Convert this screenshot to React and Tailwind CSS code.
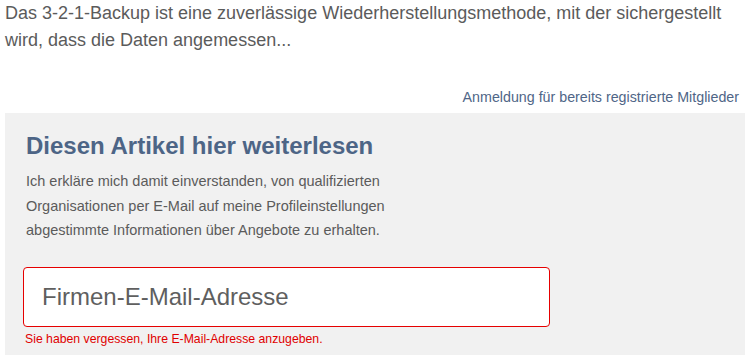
import React from "react";

export default function App() {
  return (
    <div className="w-[745px] h-[355px] overflow-hidden bg-white font-['Liberation_Sans',Arial,sans-serif]">
      <p className="px-[5px] text-[18px] leading-[27px] text-[#5b5b5b]">
        Das 3-2-1-Backup ist eine zuverlässige Wiederherstellungsmethode, mit der sichergestellt
        wird, dass die Daten angemessen...
      </p>

      <div className="mt-[33px] pr-[6px] text-right text-[14.25px] leading-[20px] text-[#4f6687]">
        <a href="#">Anmeldung für bereits registrierte Mitglieder</a>
      </div>

      <div className="ml-[5px] mt-[6px] bg-[#f1f1f1] pl-[18px] pt-[18px] pb-[20px]">
        <h2 className="pl-[3px] text-[24px] leading-[30px] font-bold text-[#4d6586]">
          Diesen Artikel hier weiterlesen
        </h2>
        <p className="mt-[8px] pl-[3px] w-[400px] text-[14.5px] leading-[24.5px] text-[#5b5b5b]">
          Ich erkläre mich damit einverstanden, von qualifizierten
          <br />
          Organisationen per E-Mail auf meine Profileinstellungen
          <br />
          abgestimmte Informationen über Angebote zu erhalten.
        </p>

        <form className="mt-[24px]">
          <input
            type="email"
            placeholder="Firmen-E-Mail-Adresse"
            className="block w-[527px] h-[60px] rounded-[4px] border border-[#e60000] bg-white pl-[18px] text-[24px] text-[#555] placeholder:text-[#5f5f5f] outline-none"
          />
          <div className="mt-[4px] pl-[2px] text-[12.25px] leading-[16px] text-[#e00000]">
            Sie haben vergessen, Ihre E-Mail-Adresse anzugeben.
          </div>
        </form>
      </div>
    </div>
  );
}
